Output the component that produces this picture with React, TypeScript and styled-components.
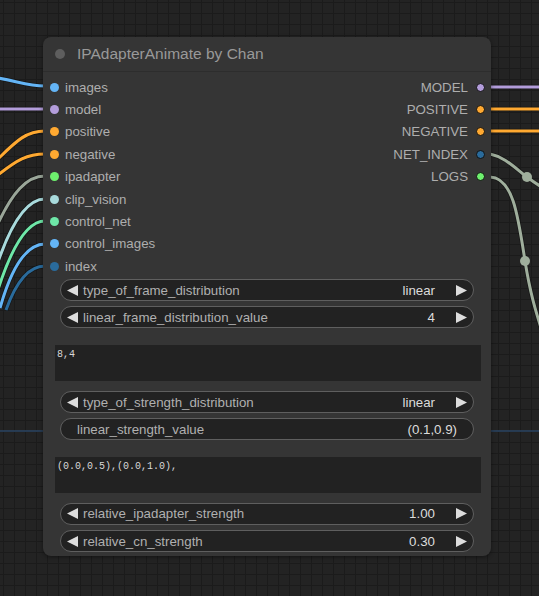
import React from "react";
import styled, { createGlobalStyle } from "styled-components";

const GlobalStyle = createGlobalStyle`
  html, body { margin: 0; padding: 0; background: #222; }
  * { box-sizing: border-box; }
`;

const Canvas = styled.div`
  position: relative;
  width: 539px;
  height: 596px;
  overflow: hidden;
  background-color: #232323;
  background-image:
    linear-gradient(#1b1b1b 1px, transparent 1px),
    linear-gradient(90deg, #1b1b1b 1px, transparent 1px);
  background-size: 11px 11px;
  background-position: 3px 2px;
  font-family: "Liberation Sans", Arial, sans-serif;
`;

const WireLayer = styled.svg`
  position: absolute;
  left: 0;
  top: 0;
`;

const Node = styled.div`
  position: absolute;
  left: 43px;
  top: 37px;
  width: 448px;
  background: #353535;
  border-radius: 8px;
  box-shadow: 0 1px 4px rgba(0, 0, 0, 0.45);
  padding-bottom: 4px;
`;

const Title = styled.div`
  height: 35px;
  display: flex;
  align-items: center;
  gap: 12px;
  padding-left: 12px;
  border-bottom: 1px solid #2d2d2d;
`;

const TitleDot = styled.span`
  width: 10px;
  height: 10px;
  border-radius: 50%;
  background: #5e5e5e;
`;

const TitleText = styled.span`
  font-size: 15.5px;
  color: #999;
`;

const Slots = styled.div`
  display: flex;
  justify-content: space-between;
  padding-top: 4px;
`;

const SlotColumn = styled.div<{ $right?: boolean }>`
  display: flex;
  flex-direction: column;
  align-items: ${(p) => (p.$right ? "flex-end" : "flex-start")};
`;

const Slot = styled.div<{ $right?: boolean }>`
  height: 22.4px;
  display: flex;
  align-items: center;
  flex-direction: ${(p) => (p.$right ? "row-reverse" : "row")};
  gap: ${(p) => (p.$right ? "7.5px" : "6.5px")};
  padding: ${(p) => (p.$right ? "0 6.5px 0 0" : "0 0 0 6.5px")};
  font-size: 13.3px;
  color: #aeaeae;
`;

const SlotDot = styled.span<{ $color: string; $outlined?: boolean }>`
  width: 9px;
  height: 9px;
  border-radius: 50%;
  background: ${(p) => p.$color};
  border: ${(p) => (p.$outlined ? "1px solid #111" : "none")};
`;

const Widgets = styled.div`
  display: flex;
  flex-direction: column;
`;

const Pill = styled.div<{ $gap: number; $plain?: boolean }>`
  margin-top: ${(p) => p.$gap}px;
  margin-left: 17px;
  width: 414px;
  height: 22px;
  border: 1px solid #5f5f5f;
  border-radius: 11px;
  background: #222;
  display: flex;
  align-items: center;
  padding: ${(p) => (p.$plain ? "0 16px 0 16px" : "0 6px 0 6px")};
  font-size: 13.3px;
`;

const PillLabel = styled.span<{ $plain?: boolean }>`
  color: #b0b0b0;
  margin-left: ${(p) => (p.$plain ? "0" : "4px")};
  flex: 1;
  white-space: nowrap;
`;

const PillValue = styled.span<{ $plain?: boolean }>`
  color: #dcdcdc;
  margin-right: ${(p) => (p.$plain ? "0" : "20px")};
  white-space: nowrap;
`;

const Arrow = styled.svg`
  flex: none;
  display: block;
`;

const TextBox = styled.div<{ $gap: number }>`
  margin-top: ${(p) => p.$gap}px;
  margin-left: 12px;
  width: 426px;
  height: 36px;
  background: #222;
  color: #d8d8d8;
  font-family: "Liberation Mono", "Courier New", monospace;
  font-size: 10px;
  padding: 4px 2px;
  white-space: pre;
`;

const LeftArrow = () => (
  <Arrow width="12" height="11" viewBox="0 0 12 11">
    <polygon points="11,0 11,11 0,5.5" fill="#ddd" />
  </Arrow>
);

const RightArrow = () => (
  <Arrow width="12" height="11" viewBox="0 0 12 11">
    <polygon points="1,0 1,11 12,5.5" fill="#ddd" />
  </Arrow>
);

type Input = { name: string; color: string };

const inputs: Input[] = [
  { name: "images", color: "#64b5f6" },
  { name: "model", color: "#b39ddb" },
  { name: "positive", color: "#ffa931" },
  { name: "negative", color: "#ffa931" },
  { name: "ipadapter", color: "#6ef06e" },
  { name: "clip_vision", color: "#a8dadc" },
  { name: "control_net", color: "#6ee7a8" },
  { name: "control_images", color: "#64b5f6" },
  { name: "index", color: "#2a6b9c" },
];

const outputs: Input[] = [
  { name: "MODEL", color: "#b39ddb" },
  { name: "POSITIVE", color: "#ffa931" },
  { name: "NEGATIVE", color: "#ffa931" },
  { name: "NET_INDEX", color: "#2a6b9c" },
  { name: "LOGS", color: "#6ef06e" },
];

type Wire = { d: string; color: string };

const wires: Wire[] = [
  { d: "M-2,78 C20,82 28,86 45,86", color: "#64b5f6" },
  { d: "M-2,109 L45,109", color: "#b39ddb" },
  { d: "M-2,159 C17,140 27,131 45,131", color: "#ffa931" },
  { d: "M-2,175 C17,160 27,154 45,154", color: "#ffa931" },
  { d: "M-4,228 C12,192 27,176 45,176", color: "#9aa699" },
  { d: "M-4,268 C11,222 27,199 45,199", color: "#a8dadc" },
  { d: "M-4,296 C11,247 27,221 45,221", color: "#6ee7a8" },
  { d: "M0,308 C12,266 27,244 45,244", color: "#64b5f6" },
  { d: "M6,310 C16,282 29,266 45,266", color: "#2a6b9c" },
  { d: "M490,87 L545,87", color: "#b39ddb" },
  { d: "M490,109 L545,109", color: "#ffa931" },
  { d: "M490,131 L545,131", color: "#ffa931" },
  { d: "M490,154 C505,157 515,168 527,177 C535,183 541,187 550,192", color: "#9fae9c" },
  { d: "M490,177 C513,178 518,215 525,261 C530,292 535,310 545,340", color: "#9fae9c" },
];

export default function App() {
  return (
    <>
      <GlobalStyle />
      <Canvas>
        <WireLayer width="539" height="596" viewBox="0 0 539 596">
          <line x1="0" y1="431" x2="539" y2="431" stroke="#2b4665" strokeWidth="1.5" />
          {wires.map((w, i) => (
            <g key={i}>
              <path d={w.d} fill="none" stroke="rgba(0,0,0,0.35)" strokeWidth="4.5" />
              <path d={w.d} fill="none" stroke={w.color} strokeWidth="3" />
            </g>
          ))}
          <circle cx="527" cy="177" r="5" fill="#9fae9c" />
          <circle cx="525" cy="261" r="5" fill="#9fae9c" />
        </WireLayer>
        <Node>
          <Title>
            <TitleDot />
            <TitleText>IPAdapterAnimate by Chan</TitleText>
          </Title>
          <Slots>
            <SlotColumn>
              {inputs.map((s) => (
                <Slot key={s.name}>
                  <SlotDot $color={s.color} />
                  <span>{s.name}</span>
                </Slot>
              ))}
            </SlotColumn>
            <SlotColumn $right>
              {outputs.map((s) => (
                <Slot key={s.name} $right>
                  <SlotDot $color={s.color} $outlined />
                  <span>{s.name}</span>
                </Slot>
              ))}
            </SlotColumn>
          </Slots>
          <Widgets>
            <Pill $gap={1.6}>
              <LeftArrow />
              <PillLabel>type_of_frame_distribution</PillLabel>
              <PillValue>linear</PillValue>
              <RightArrow />
            </Pill>
            <Pill $gap={5}>
              <LeftArrow />
              <PillLabel>linear_frame_distribution_value</PillLabel>
              <PillValue>4</PillValue>
              <RightArrow />
            </Pill>
            <TextBox $gap={17}>8,4</TextBox>
            <Pill $gap={10}>
              <LeftArrow />
              <PillLabel>type_of_strength_distribution</PillLabel>
              <PillValue>linear</PillValue>
              <RightArrow />
            </Pill>
            <Pill $gap={5} $plain>
              <PillLabel $plain>linear_strength_value</PillLabel>
              <PillValue $plain>(0.1,0.9)</PillValue>
            </Pill>
            <TextBox $gap={17}>(0.0,0.5),(0.0,1.0),</TextBox>
            <Pill $gap={9.5}>
              <LeftArrow />
              <PillLabel>relative_ipadapter_strength</PillLabel>
              <PillValue>1.00</PillValue>
              <RightArrow />
            </Pill>
            <Pill $gap={5.4}>
              <LeftArrow />
              <PillLabel>relative_cn_strength</PillLabel>
              <PillValue>0.30</PillValue>
              <RightArrow />
            </Pill>
          </Widgets>
        </Node>
      </Canvas>
    </>
  );
}
